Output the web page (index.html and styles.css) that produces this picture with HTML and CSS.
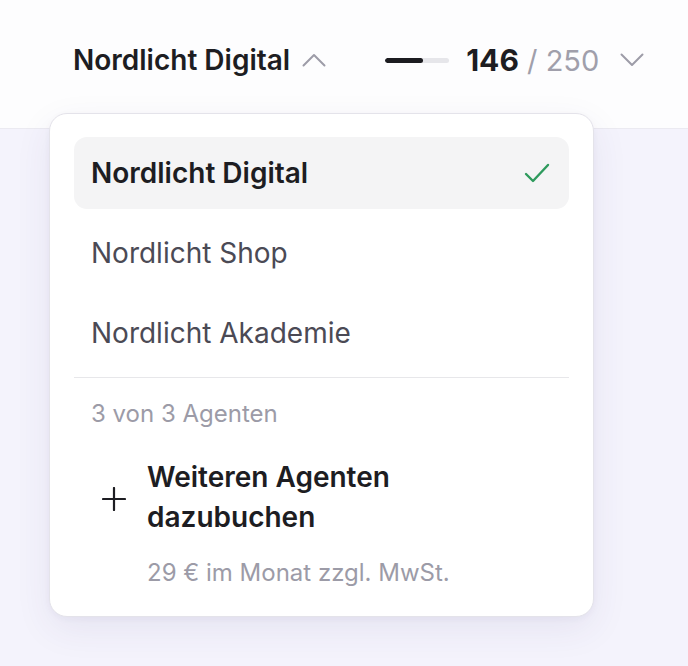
FILE: index.html
```html
<!DOCTYPE html>
<html lang="de">
<head>
<meta charset="utf-8">
<link rel="stylesheet" href="styles.css">
</head>
<body>
<header class="topbar">
  <div class="account">
    <span class="account-name">Nordlicht Digital</span>
    <svg class="chev" width="24" height="14" viewBox="0 0 24 14"><path d="M1.5 12.5 L12 2 L22.5 12.5" fill="none" stroke="#9d9ca8" stroke-width="2" stroke-linecap="round" stroke-linejoin="round"/></svg>
  </div>
  <div class="usage">
    <div class="bar"><div class="bar-fill" style="width:58.4%"></div></div>
    <span class="count"><b>146</b> <span class="total">/ 250</span></span>
    <svg class="chev" width="24" height="14" viewBox="0 0 24 14"><path d="M1.5 1.5 L12 12 L22.5 1.5" fill="none" stroke="#9d9ca8" stroke-width="2" stroke-linecap="round" stroke-linejoin="round"/></svg>
  </div>
</header>
<main class="canvas"></main>

<div class="menu">
  <div class="menu-item is-active">
    <span>Nordlicht Digital</span>
    <svg width="26" height="22" viewBox="0 0 26 22"><path d="M2 12 L9 19 L24 3" fill="none" stroke="#2e9a5d" stroke-width="2.4" stroke-linecap="round" stroke-linejoin="round"/></svg>
  </div>
  <div class="menu-item">Nordlicht Shop</div>
  <div class="menu-item">Nordlicht Akademie</div>
  <div class="divider"></div>
  <div class="quota">3 von 3 Agenten</div>
  <div class="add">
    <svg class="plus" width="24" height="24" viewBox="0 0 24 24"><path d="M12 1 V23 M1 12 H23" stroke="#1d1d22" stroke-width="2.2" stroke-linecap="round"/></svg>
    <div class="add-text">
      <div class="add-title">Weiteren Agenten dazubuchen</div>
      <div class="add-price">29 € im Monat zzgl. MwSt.</div>
    </div>
  </div>
</div>
</body>
</html>
```
FILE: styles.css
```css
* { box-sizing: border-box; }
html, body { margin: 0; padding: 0; }
body {
  font-family: Inter, "Noto Sans", sans-serif;
  background: #f4f3fc;
  width: 688px;
  height: 666px;
  overflow: hidden;
  position: relative;
  color: #1d1d22;
}
.topbar {
  height: 129px;
  background: #fdfdfe;
  border-bottom: 1px solid #ebeaf1;
  display: flex;
  align-items: center;
  padding: 0 0 8px 73px;
}
.account {
  display: flex;
  align-items: center;
  gap: 12px;
}
.account-name {
  font-size: 28px;
  font-weight: 600;
}
.chev { display: block; }
.usage {
  display: flex;
  align-items: center;
  margin-left: 59px;
}
.bar {
  width: 64px;
  height: 5px;
  border-radius: 3px;
  background: #e6e6ea;
  overflow: hidden;
}
.bar-fill {
  height: 100%;
  background: #1c1c20;
  border-radius: 3px;
}
.count {
  margin-left: 17px;
  font-size: 29px;
  font-weight: 400;
  color: #a09fab;
}
.count b { font-weight: 700; color: #1d1d22; font-size: 30px; }
.usage .chev { margin-left: 21px; }

.menu {
  position: absolute;
  left: 49px;
  top: 113px;
  width: 545px;
  height: 504px;
  background: #fff;
  border: 1px solid #e4e3ea;
  border-radius: 18px;
  box-shadow: 0 12px 36px rgba(60, 55, 110, 0.08), 0 2px 6px rgba(60,55,110,0.04);
  padding: 23px 24px 24px;
  display: flex;
  flex-direction: column;
}
.menu-item {
  height: 72px;
  display: flex;
  align-items: center;
  justify-content: space-between;
  padding: 0 19px 0 17px;
  font-size: 28px;
  color: #4b4a55;
  border-radius: 13px;
  margin-bottom: 8px;
}
.menu-item.is-active {
  background: #f4f4f5;
  color: #1d1d22;
  font-weight: 600;
}
.divider {
  height: 1px;
  background: #e7e7ea;
  margin: 0 0 22px;
}
.quota {
  font-size: 24px;
  line-height: 28px;
  color: #9c9ba7;
  padding-left: 17px;
}
.add {
  display: flex;
  align-items: flex-start;
  margin-top: 29px;
  padding-left: 28px;
}
.plus { margin-top: 30px; flex: none; }
.add-text { margin-left: 21px; }
.add-title {
  font-size: 28px;
  line-height: 40px;
  font-weight: 600;
  width: 320px;
  color: #1d1d22;
}
.add-price {
  margin-top: 22px;
  font-size: 24px;
  line-height: 28px;
  color: #9c9ba7;
}
```
